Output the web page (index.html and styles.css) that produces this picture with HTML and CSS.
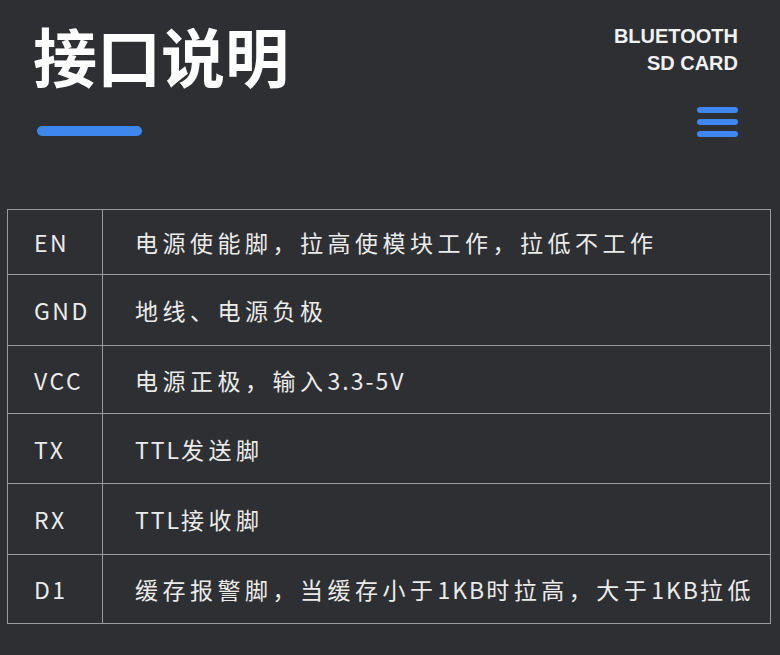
FILE: index.html
```html
<!DOCTYPE html>
<html lang="zh">
<head>
<meta charset="utf-8">
<link rel="stylesheet" href="styles.css">
</head>
<body>
<div class="page">
  <header class="header">
    <div class="title-block">
      <h1 class="title">接口说明</h1>
      <div class="title-bar"></div>
    </div>
    <div class="brand-block">
      <div class="brand">BLUETOOTH<br>SD CARD</div>
      <div class="menu">
        <span></span><span></span><span></span>
      </div>
    </div>
  </header>
  <table class="pins">
    <tr><td class="pin">EN</td><td class="desc">电源使能脚，拉高使模块工作，拉低不工作</td></tr>
    <tr><td class="pin">GND</td><td class="desc">地线、电源负极</td></tr>
    <tr><td class="pin">VCC</td><td class="desc">电源正极，输入<span class="lat">3.3-5V</span></td></tr>
    <tr><td class="pin">TX</td><td class="desc"><span class="lat">TTL</span>发送脚</td></tr>
    <tr><td class="pin">RX</td><td class="desc"><span class="lat">TTL</span>接收脚</td></tr>
    <tr><td class="pin">D1</td><td class="desc">缓存报警脚，当缓存小于<span class="lat">1KB</span>时拉高，大于<span class="lat">1KB</span>拉低</td></tr>
  </table>
</div>
</body>
</html>
```
FILE: styles.css
```css
html, body {
  margin: 0;
  padding: 0;
  background: #2e2f32;
}
body {
  width: 780px;
  height: 655px;
  overflow: hidden;
  font-family: "Noto Sans CJK SC", "Noto Sans", sans-serif;
  color: #ececec;
}
.page {
  padding: 0 0 0 7px;
}
.header {
  display: flex;
  justify-content: space-between;
  align-items: flex-start;
  padding: 0 42px 0 26px;
  height: 209px;
}
.title-block {
  display: flex;
  flex-direction: column;
}
.title {
  margin: 0;
  padding-top: 14px;
  font-size: 64px;
  line-height: 80px;
  font-weight: 700;
  color: #ffffff;
  letter-spacing: 0;
}
.title-bar {
  margin-top: 32px;
  margin-left: 4px;
  width: 105px;
  height: 10px;
  border-radius: 5px;
  background: #3e87ef;
}
.brand-block {
  display: flex;
  flex-direction: column;
  align-items: flex-end;
  padding-top: 23px;
}
.brand {
  font-family: "Liberation Sans", Arial, sans-serif;
  font-weight: 700;
  font-size: 20px;
  line-height: 27px;
  text-align: right;
  color: #f2f2f2;
}
.menu {
  margin-top: 30px;
  display: flex;
  flex-direction: column;
  gap: 6px;
}
.menu span {
  display: block;
  width: 41px;
  height: 6px;
  border-radius: 3px;
  background: #3e87ef;
}
.pins {
  border-collapse: collapse;
  width: 764px;
  font-size: 23px;
  letter-spacing: 4.5px;
}
.pins td {
  border: 1px solid #9a9a9c;
  padding: 0;
  vertical-align: middle;
  color: #ebebeb;
}
.pins tr:nth-child(1) td { height: 64px; }
.pins tr:nth-child(2) td { height: 70px; }
.pins tr:nth-child(3) td { height: 67px; }
.pins tr:nth-child(4) td { height: 69px; }
.pins tr:nth-child(5) td { height: 70px; }
.pins tr:nth-child(6) td { height: 68px; }
.pins .pin {
  width: 68px;
  padding-left: 26px;
  letter-spacing: 2.5px;
}
.pins .desc {
  padding-left: 32px;
  white-space: nowrap;
}
.pins .lat {
  letter-spacing: 2px;
}
```
